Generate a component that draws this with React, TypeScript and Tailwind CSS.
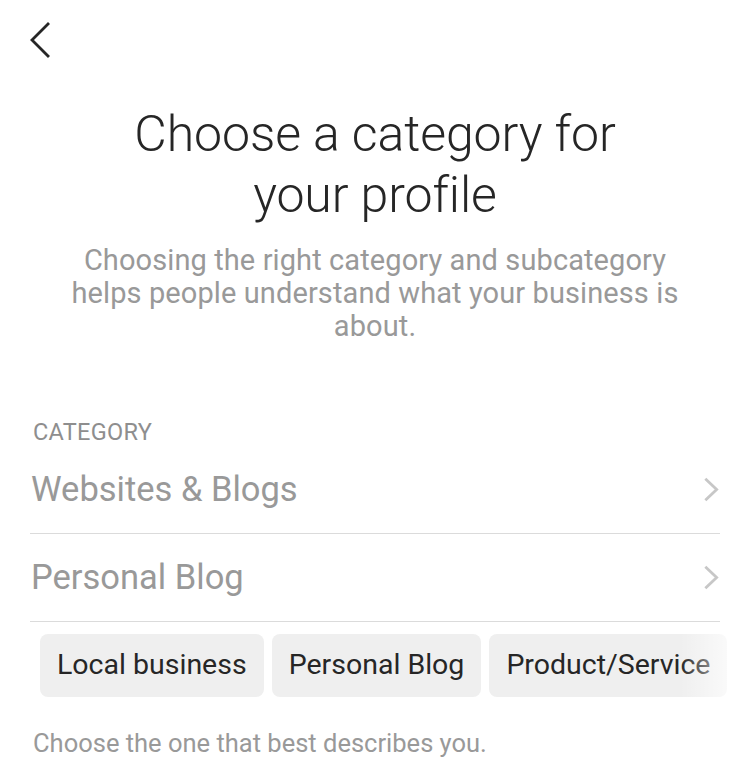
import React from "react";

function Chevron({ className }: { className?: string }) {
  return (
    <svg viewBox="0 0 16 26" className={className} fill="none">
      <path d="M2.5 2.5 L13.5 13 L2.5 23.5" stroke="currentColor" strokeWidth="3" strokeLinecap="square" />
    </svg>
  );
}

export default function App() {
  const font = { fontFamily: "Roboto, 'Noto Sans', sans-serif" };
  return (
    <div className="w-[750px] h-[777px] bg-white overflow-hidden" style={font}>
      <div className="pt-[22px] pl-[29px]">
        <svg viewBox="0 0 22 36" className="w-[22px] h-[36px] text-[#262626]" fill="none">
          <path d="M19 2 L3 18 L19 34" stroke="currentColor" strokeWidth="2.8" strokeLinecap="square" />
        </svg>
      </div>
      <div className="mt-[46px] flex flex-col items-center text-center px-[60px]">
        <h1 className="text-[50px] leading-[61px] text-[#262626] font-light tracking-[-0.1px]">
          Choose a category for
          <br />
          your profile
        </h1>
        <p className="mt-[18px] text-[29px] leading-[33px] text-[#999999] tracking-[0.1px]">
          Choosing the right category and subcategory helps people understand what your business is about.
        </p>
      </div>
      <div className="mt-[75px] px-[30px]">
        <div className="pl-[3px] text-[23.5px] leading-[28px] text-[#8e8e8e] tracking-[0.3px]">CATEGORY</div>
        <div className="flex items-center justify-between h-[88px] border-b border-[#dbdbdb]">
          <span className="text-[34.5px] text-[#999999] pl-[1px]">Websites &amp; Blogs</span>
          <Chevron className="w-[15px] h-[25px] text-[#c7c7c7] mr-[1px]" />
        </div>
        <div className="flex items-center justify-between h-[88px] border-b border-[#dbdbdb]">
          <span className="text-[34.5px] text-[#999999] pl-[1px]">Personal Blog</span>
          <Chevron className="w-[15px] h-[25px] text-[#c7c7c7] mr-[1px]" />
        </div>
      </div>
      <div className="relative mt-[12px] pl-[40px] flex gap-[8px] overflow-hidden whitespace-nowrap">
        {["Local business", "Personal Blog", "Product/Service"].map((c) => (
          <div
            key={c}
            className="h-[63px] px-[17px] flex items-center rounded-[8px] bg-[#efefef] text-[28.5px] text-[#262626] shrink-0"
          >
            {c}
          </div>
        ))}
        <div className="absolute top-0 right-0 h-[63px] w-[70px] bg-gradient-to-r from-transparent to-white" />
      </div>
      <div className="mt-[32px] pl-[33px] text-[25.5px] leading-[28px] text-[#999999]">
        Choose the one that best describes you.
      </div>
    </div>
  );
}
